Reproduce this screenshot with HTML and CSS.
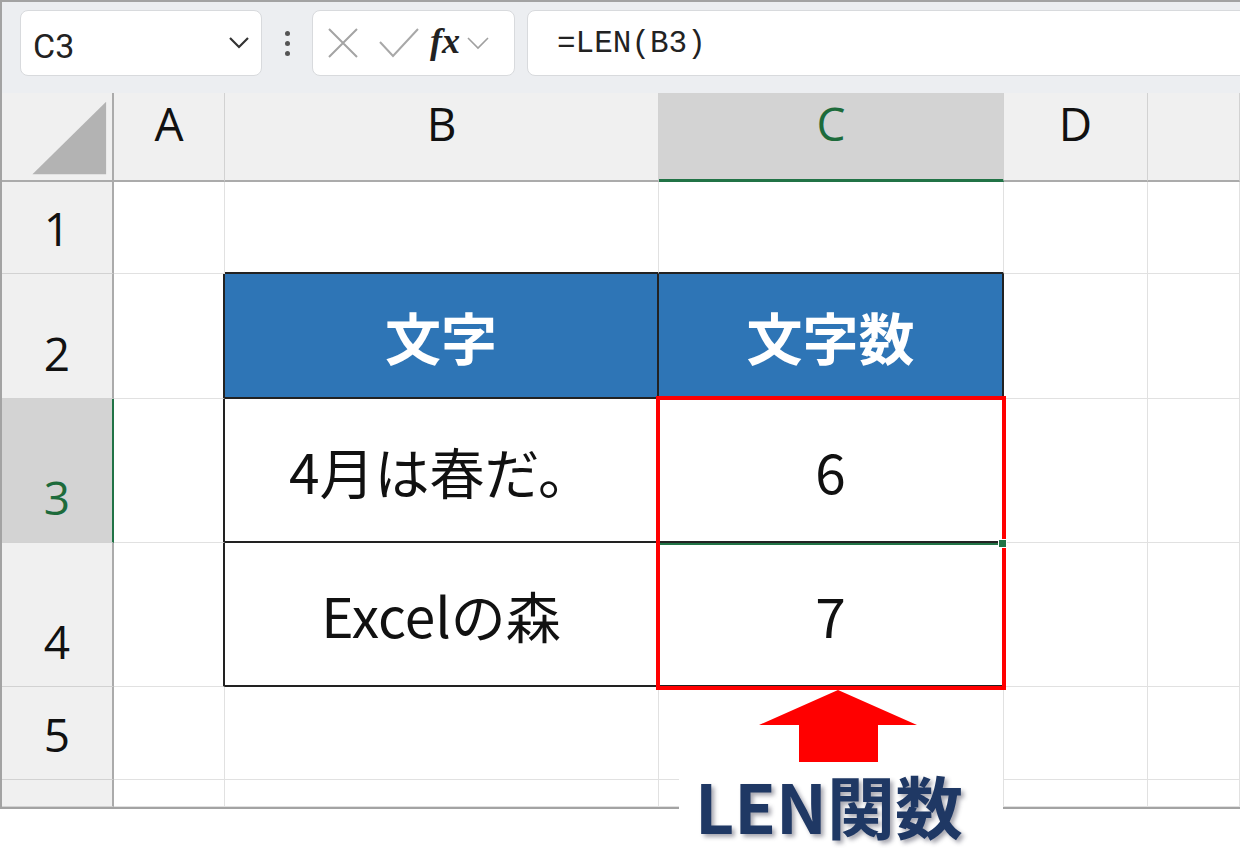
FILE: index.html
```html
<!doctype html>
<html>
    <head>
        <meta charset="utf-8">
        <link rel="stylesheet" href="styles.css">
    </head>
    <body>
        <div class="page">
            <div class="fbar">
                <div class="namebox">
                    <span class="ref">C3</span>
                    <svg width="22" height="14" viewBox="0 0 22 14"><path d="M2 2 L11 11 L20 2" fill="none" stroke="#333" stroke-width="2.2"/></svg>
                </div>
                <div class="dots"><i></i><i></i><i></i></div>
                <div class="fxbox">
                    <svg width="34" height="34" viewBox="0 0 34 34"><path d="M3 3 L31 31 M31 3 L3 31" stroke="#a4a4a4" stroke-width="2"/></svg>
                    <svg width="42" height="34" viewBox="0 0 42 34"><path d="M2 16 L15 30 L40 3" fill="none" stroke="#a8a8a8" stroke-width="2"/></svg>
                    <span class="fx">fx</span>
                    <svg width="24" height="14" viewBox="0 0 24 14"><path d="M2 2 L12 12 L22 2" fill="none" stroke="#a0a0a0" stroke-width="1.6"/></svg>
                </div>
                <div class="formula">=LEN(B3)</div>
            </div>

            <div class="sheet">
                <!-- column headers -->
                <div class="ch corner"><svg width="112" height="89" viewBox="0 0 112 89"><polygon points="31,82 106,8 106,82" fill="#b3b3b3"/></svg></div>
                <div class="ch">A</div>
                <div class="ch">B</div>
                <div class="ch on">C</div>
                <div class="ch">D</div>
                <div class="ch"></div>

                <!-- row 1 -->
                <div class="rh">1</div>
                <div class="c"></div>
                <div class="c tt"></div>
                <div class="c tt"></div>
                <div class="c"></div>
                <div class="c"></div>

                <!-- row 2 -->
                <div class="rh">2</div>
                <div class="c tl"></div>
                <div class="c tb th">文字</div>
                <div class="c tb th">文字数</div>
                <div class="c"></div>
                <div class="c"></div>

                <!-- row 3 -->
                <div class="rh on">3</div>
                <div class="c tl"></div>
                <div class="c tb">4月は春だ。</div>
                <div class="c tb">6</div>
                <div class="c"></div>
                <div class="c"></div>

                <!-- row 4 -->
                <div class="rh">4</div>
                <div class="c tl"></div>
                <div class="c tb">Excelの森</div>
                <div class="c tb">7</div>
                <div class="c"></div>
                <div class="c"></div>

                <!-- row 5 -->
                <div class="rh">5</div>
                <div class="c"></div>
                <div class="c"></div>
                <div class="c"></div>
                <div class="c"></div>
                <div class="c"></div>

                <!-- row 6 (cut off) -->
                <div class="rh"></div>
                <div class="c"></div>
                <div class="c"></div>
                <div class="c"></div>
                <div class="c"></div>
                <div class="c"></div>
            </div>

            <!-- overlays -->
            <div class="sel"></div>
            <div class="redbox"></div>
            <div class="handle"></div>
            <svg class="arrow" width="160" height="74" viewBox="0 0 160 74"><polygon points="79,0 158,35 119,35 119,72 40,72 40,35 0,35" fill="#ff0000"/></svg>
            <div class="label">LEN関数</div>
        </div>
    </body>
</html>
```

FILE: styles.css
```css
* {
    margin: 0;
    padding: 0;
    box-sizing: border-box;
}
body {
    background: #fff;
    font-family: "Open Sans", "Noto Sans", sans-serif;
}
.page {
    position: relative;
    width: 1240px;
    height: 866px;
    overflow: hidden;
}

/* formula bar */
.fbar {
    height: 93px;
    background: #eceef1;
    border-top: 2px solid #a3a3a3;
    border-left: 2px solid #a3a3a3;
    display: flex;
    align-items: flex-start;
    padding: 8px 0 0 18px;
}
.namebox, .fxbox, .formula {
    height: 66px;
    background: #fff;
    border: 1px solid #d8dadd;
    border-radius: 8px;
    display: flex;
    align-items: center;
}
.namebox {
    width: 242px;
    padding: 0 11px 0 12px;
    justify-content: space-between;
}
.ref {
    font-family: Roboto, sans-serif;
    font-size: 34px;
    color: #222;
    padding-top: 5px;
}
.dots {
    width: 50px;
    height: 66px;
    display: flex;
    flex-direction: column;
    align-items: center;
    justify-content: center;
    gap: 5px;
}
.dots i {
    display: block;
    width: 5px;
    height: 5px;
    border-radius: 50%;
    background: #555;
}
.fxbox {
    width: 203px;
    padding-left: 13px;
}
.fxbox svg:nth-child(2) {
    margin-left: 18px;
}
.fx {
    font-family: "Liberation Serif", serif;
    font-style: italic;
    font-weight: bold;
    font-size: 36px;
    color: #222;
    margin-left: 10px;
    margin-right: 6px;
    padding-bottom: 4px;
}
.formula {
    flex: 1;
    margin-left: 12px;
    margin-right: -20px;
    padding-left: 29px;
    font-family: "Liberation Mono", monospace;
    font-size: 31px;
    color: #222;
}

/* sheet */
.sheet {
    display: grid;
    grid-template-columns: 112px 111px 434px 345px 144px 1fr;
    grid-template-rows: 89px 92px 125px 144px 144px 93px 27px;
    border-left: 2px solid #a3a3a3;
    border-bottom: 2px solid #a3a3a3;
}
.ch {
    background: #f0f0f0;
    border-right: 1px solid #d2d2d2;
    border-bottom: 2px solid #ababab;
    display: flex;
    justify-content: center;
    align-items: flex-start;
    padding-top: 7px;
    font-size: 46px;
    line-height: 1;
    color: #111;
}
.corner {
    padding: 0;
    border-right: 2px solid #ababab;
}
.ch.on {
    background: #d3d3d3;
    color: #1d6b3b;
    border-bottom: 3px solid #217346;
}
.rh {
    background: #f0f0f0;
    border-right: 2px solid #ababab;
    border-bottom: 1px solid #d2d2d2;
    display: flex;
    justify-content: center;
    align-items: flex-end;
    padding-bottom: 22px;
    font-size: 46px;
    line-height: 1;
    color: #111;
}
.rh.on {
    background: #d3d3d3;
    color: #1d6b3b;
    border-right: 2px solid #217346;
}
.c {
    border-right: 1px solid #e1e1e1;
    border-bottom: 1px solid #e1e1e1;
    display: flex;
    justify-content: center;
    align-items: center;
    font-family: "Noto Sans CJK JP", sans-serif;
    font-size: 55px;
    line-height: 1;
    color: #111;
}
.tt {
    border-bottom: 2px solid #222;
}
.tl {
    border-right: 2px solid #222;
}
.tb {
    border-right: 2px solid #222;
    border-bottom: 2px solid #222;
}
.th {
    background: #2e75b6;
    color: #fff;
    font-weight: bold;
    font-size: 56px;
}

/* overlays */
.sel {
    position: absolute;
    left: 657px;
    top: 397px;
    width: 348px;
    height: 148px;
    border: 2px solid #217346;
}
.redbox {
    position: absolute;
    left: 656px;
    top: 396px;
    width: 350px;
    height: 294px;
    border: 4px solid #ff0000;
}
.handle {
    position: absolute;
    left: 998px;
    top: 539px;
    width: 9px;
    height: 9px;
    background: #217346;
    border: 1px solid #fff;
}
.arrow {
    position: absolute;
    left: 759px;
    top: 690px;
}
.label {
    position: absolute;
    left: 679px;
    top: 779px;
    width: 324px;
    height: 87px;
    padding-right: 24px;
    background: #fff;
    text-align: center;
    font-family: "Noto Sans CJK JP", sans-serif;
    font-weight: bold;
    font-size: 68px;
    line-height: 52px;
    color: #1f3864;
    text-shadow: 3px 3px 4px rgba(60, 60, 80, 0.45);
}
```
